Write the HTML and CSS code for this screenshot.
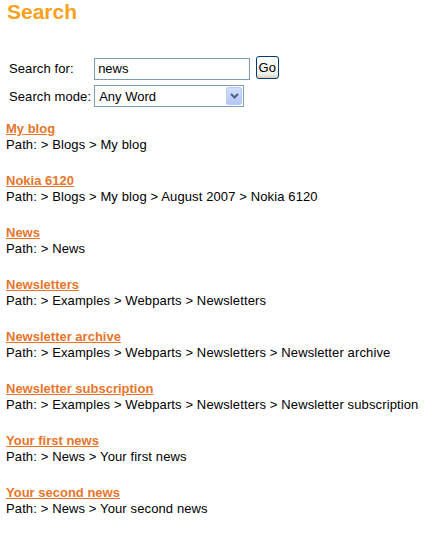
FILE: index.html
```html
<!DOCTYPE html>
<html lang="en">
<head>
  <meta charset="UTF-8" />
  <title>Search</title>
  <link rel="stylesheet" href="styles.css">
</head>
<body>
  <h1 class="page-title">Search</h1>

  <table class="search-form">
    <tr>
      <td class="label">Search for:</td>
      <td class="field">
        <input type="text" class="search-input" value="news" />
        <button class="go-btn">Go</button>
      </td>
    </tr>
    <tr class="mode-row">
      <td class="label">Search mode:</td>
      <td class="field">
        <span class="select-wrap">
          <select class="search-mode">
            <option>Any Word</option>
            <option>All Words</option>
            <option>Exact Phrase</option>
          </select>
          <span class="select-arrow">
            <svg width="9" height="6" viewBox="0 0 9 6"><path d="M1 1 L4.5 4.5 L8 1" fill="none" stroke="#4d6185" stroke-width="2"/></svg>
          </span>
        </span>
      </td>
    </tr>
  </table>

  <div class="results">
    <div class="result">
      <a href="#">My blog</a>
      <div class="path">Path: &gt; Blogs &gt; My blog</div>
    </div>
    <div class="result">
      <a href="#">Nokia 6120</a>
      <div class="path">Path: &gt; Blogs &gt; My blog &gt; August 2007 &gt; Nokia 6120</div>
    </div>
    <div class="result">
      <a href="#">News</a>
      <div class="path">Path: &gt; News</div>
    </div>
    <div class="result">
      <a href="#">Newsletters</a>
      <div class="path">Path: &gt; Examples &gt; Webparts &gt; Newsletters</div>
    </div>
    <div class="result">
      <a href="#">Newsletter archive</a>
      <div class="path">Path: &gt; Examples &gt; Webparts &gt; Newsletters &gt; Newsletter archive</div>
    </div>
    <div class="result">
      <a href="#">Newsletter subscription</a>
      <div class="path">Path: &gt; Examples &gt; Webparts &gt; Newsletters &gt; Newsletter subscription</div>
    </div>
    <div class="result">
      <a href="#">Your first news</a>
      <div class="path">Path: &gt; News &gt; Your first news</div>
    </div>
    <div class="result">
      <a href="#">Your second news</a>
      <div class="path">Path: &gt; News &gt; Your second news</div>
    </div>
  </div>
</body>
</html>
```

FILE: styles.css
```css
body {
  font-family: "Liberation Sans", Arial, sans-serif;
  font-size: 13px;
  color: #000;
  background: #fff;
  margin: 0;
  padding: 0 6px;
}

.page-title {
  font-size: 21px;
  line-height: 24px;
  font-weight: bold;
  color: #f7a21c;
  margin: 0 0 31px 1px;
}

.search-form {
  border-collapse: separate;
  border-spacing: 0;
  margin-bottom: 12px;
}

.search-form td {
  padding: 2px 0;
  vertical-align: middle;
  white-space: nowrap;
}

.search-form .mode-row td {
  padding-top: 3px;
}

.search-form .label {
  padding-left: 3px;
  letter-spacing: 0.1px;
}

.search-form .field {
  padding-left: 3px;
}

.search-input {
  font-family: "Liberation Sans", Arial, sans-serif;
  font-size: 13px;
  width: 156px;
  height: 22px;
  box-sizing: border-box;
  border: 1px solid #7f9db9;
  padding: 1px 3px;
  margin: 0;
  vertical-align: middle;
}

.go-btn {
  font-family: "Liberation Sans", Arial, sans-serif;
  font-size: 13px;
  width: 23px;
  height: 23px;
  padding: 0;
  margin: 0 0 0 2px;
  border: 1px solid #003c74;
  border-radius: 3px;
  background: linear-gradient(#ffffff, #f0f0ea 80%, #d6d0c5);
  color: #000;
  vertical-align: middle;
  position: relative;
  top: -1px;
}

.select-wrap {
  position: relative;
  display: inline-block;
  vertical-align: middle;
}

.search-mode {
  -webkit-appearance: none;
  appearance: none;
  font-family: "Liberation Sans", Arial, sans-serif;
  font-size: 13px;
  width: 150px;
  height: 22px;
  box-sizing: border-box;
  border: 1px solid #7f9db9;
  border-radius: 0;
  padding: 0 4px;
  margin: 0;
  background: #fff;
  color: #000;
}

.select-arrow {
  position: absolute;
  right: 2px;
  top: 2px;
  width: 16px;
  height: 18px;
  box-sizing: border-box;
  border: 1px solid #b8cbf3;
  border-radius: 2px;
  background: linear-gradient(#d2ddfb, #b3c6f5);
  display: flex;
  align-items: center;
  justify-content: center;
  pointer-events: none;
}

.result {
  line-height: 16px;
  margin-bottom: 20px;
}

.result a {
  display: block;
  font-weight: bold;
  color: #e8752b;
  text-decoration: underline;
}

.result .path {
  letter-spacing: 0.12px;
}
```
